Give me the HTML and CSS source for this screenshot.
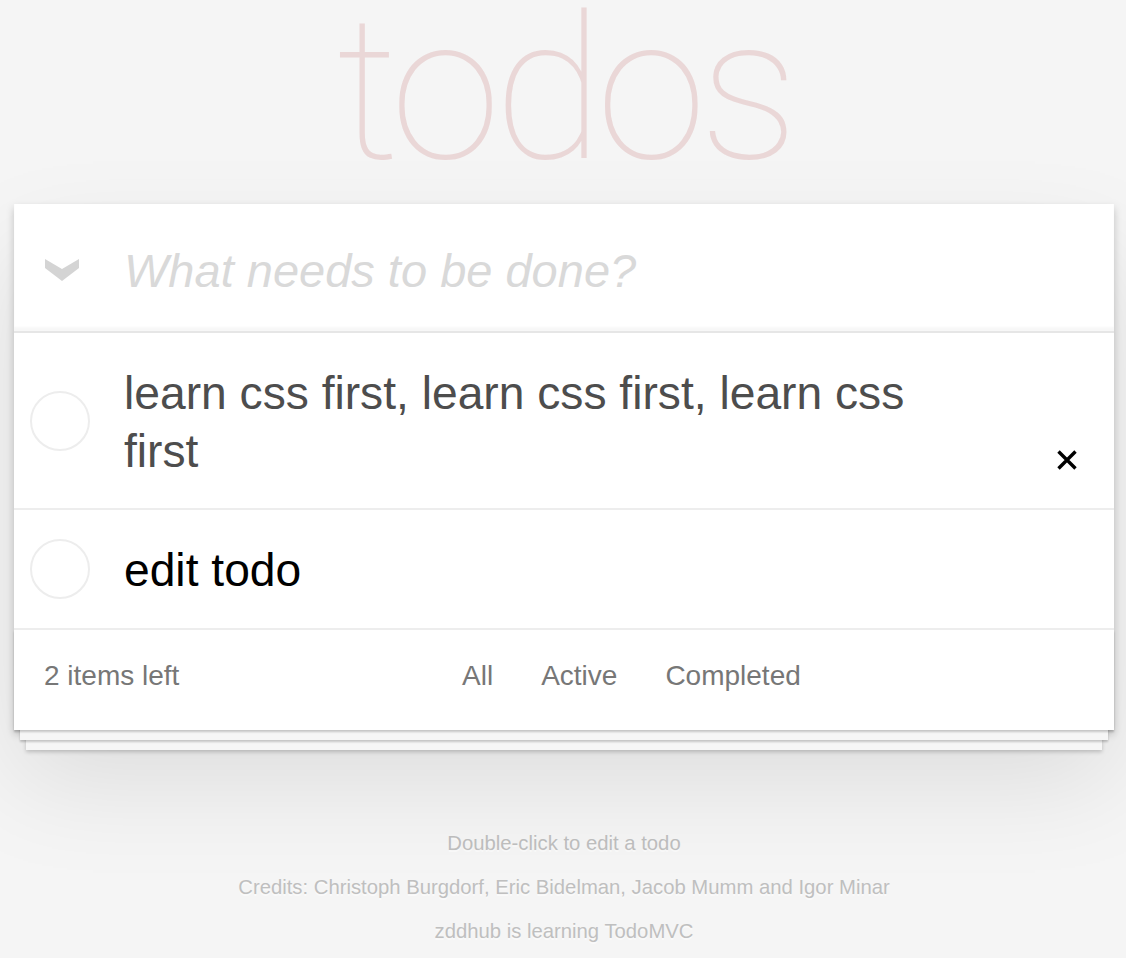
FILE: index.html
```html
<!DOCTYPE html>
<html lang="en">
<head>
<meta charset="utf-8">
<title>TodoMVC</title>
<link rel="stylesheet" href="styles.css">
</head>
<body>
<div class="page">
  <h1 class="title">todos</h1>
  <section class="todoapp">
    <header class="new-row">
      <span class="toggle-all">
        <svg width="34" height="22" viewBox="0 0 34 22"><path d="M0 0 L17 10 L34 0 L34 9 L17 22 L0 9 Z" fill="#d4d4d4"/></svg>
      </span>
      <input class="new-todo" placeholder="What needs to be done?">
    </header>
    <section class="main">
      <ul class="todo-list">
        <li class="todo">
          <span class="toggle"></span>
          <label class="todo-label">learn css first, learn css first, learn css first</label>
          <button class="destroy" aria-label="delete">
            <svg width="20" height="20" viewBox="0 0 20 20"><path d="M1.5 1.5 L18.5 18.5 M18.5 1.5 L1.5 18.5" stroke="#000" stroke-width="3.4"/></svg>
          </button>
        </li>
        <li class="todo">
          <span class="toggle"></span>
          <label class="todo-label dark">edit todo</label>
        </li>
      </ul>
    </section>
    <footer class="footer">
      <span class="count">2 items left</span>
      <ul class="filters">
        <li><a href="#/">All</a></li>
        <li><a href="#/active">Active</a></li>
        <li><a href="#/completed">Completed</a></li>
      </ul>
    </footer>
  </section>
  <footer class="info">
    <p>Double-click to edit a todo</p>
    <p>Credits: Christoph Burgdorf, Eric Bidelman, Jacob Mumm and Igor Minar</p>
    <p>zddhub is learning TodoMVC</p>
  </footer>
</div>
</body>
</html>
```

FILE: styles.css
```css
html, body {
  margin: 0;
  padding: 0;
}

body {
  background: #f5f5f5;
  color: #4d4d4d;
  font-family: "Liberation Sans", Arial, sans-serif;
}

.page {
  width: 1100px;
  margin: 0 12px 0 14px;
}

.title {
  margin: 0 0 24px;
  height: 180px;
  line-height: 180px;
  font-family: Roboto, Inter, Lato, sans-serif;
  font-weight: 100;
  font-size: 200px;
  letter-spacing: -7px;
  text-align: center;
  color: rgba(175, 47, 47, 0.15);
}

.todoapp {
  position: relative;
  background: #fff;
  box-shadow: 0 4px 8px 0 rgba(0, 0, 0, 0.2), 0 50px 100px 0 rgba(0, 0, 0, 0.1);
}

.new-row {
  display: flex;
  align-items: center;
  height: 127px;
  box-shadow: inset 0 -4px 2px rgba(0, 0, 0, 0.03);
}

.toggle-all {
  display: flex;
  width: 34px;
  height: 22px;
  margin: 4px 0 0 31px;
}

.new-todo {
  flex: 1;
  align-self: stretch;
  border: none;
  outline: none;
  background: transparent;
  margin: 0;
  padding: 6px 0 0 45px;
  font-family: "Liberation Sans", Arial, sans-serif;
  font-size: 47px;
  color: #4d4d4d;
}

.new-todo::placeholder {
  font-style: italic;
  color: #d9d9d9;
}

.main {
  border-top: 2px solid #e6e6e6;
}

.todo-list {
  list-style: none;
  margin: 0;
  padding: 0;
}

.todo {
  position: relative;
  display: flex;
  align-items: center;
  border-bottom: 2px solid #ededed;
}

.toggle {
  flex: none;
  width: 56px;
  height: 56px;
  margin-left: 16px;
  border: 2px solid #ededed;
  border-radius: 50%;
}

.todo-label {
  flex: 1;
  margin-left: 34px;
  padding: 32px 160px 28px 0;
  font-size: 46.2px;
  line-height: 57.6px;
  color: #4d4d4d;
}

.todo-label.dark {
  color: #000;
}

.destroy {
  position: absolute;
  right: 37px;
  bottom: 38px;
  width: 20px;
  height: 20px;
  padding: 0;
  margin: 0;
  border: none;
  background: none;
  display: flex;
}

.footer {
  position: relative;
  display: flex;
  align-items: center;
  height: 100px;
  box-sizing: border-box;
  padding: 0 0 8px 30px;
  color: #777;
  font-size: 28px;
  line-height: 40px;
}

.footer::before {
  content: "";
  position: absolute;
  left: 0;
  right: 0;
  bottom: 0;
  height: 100px;
  pointer-events: none;
  box-shadow: 0 2px 2px rgba(0, 0, 0, 0.2),
    0 16px 0 -6px #f6f6f6,
    0 18px 2px -6px rgba(0, 0, 0, 0.2),
    0 32px 0 -12px #f6f6f6,
    0 34px 4px -12px rgba(0, 0, 0, 0.2);
}

.count {
  position: relative;
  width: 418px;
}

.filters {
  position: relative;
  display: flex;
  gap: 48px;
  list-style: none;
  margin: 0;
  padding: 0;
}

.filters a {
  color: #777;
  text-decoration: none;
}

.info {
  margin-top: 101px;
  color: #bfbfbf;
  font-size: 20.3px;
  line-height: 24px;
  text-align: center;
  text-shadow: 0 2px 0 rgba(255, 255, 255, 0.5);
}

.info p {
  margin: 0 0 20px;
}
```
